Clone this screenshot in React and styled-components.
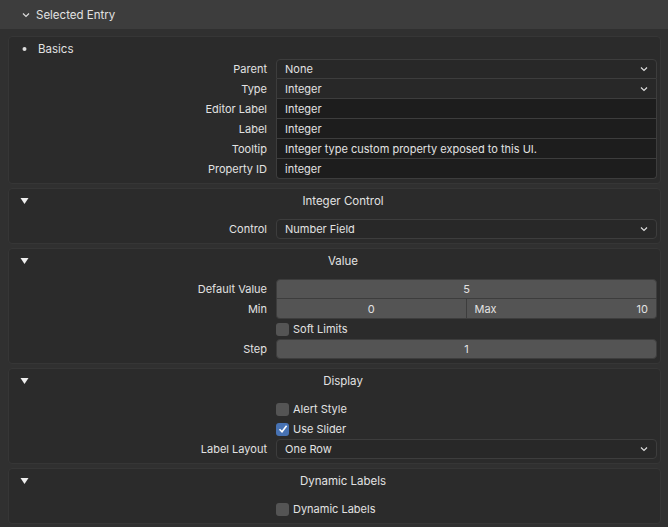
import React from 'react';
import styled, { createGlobalStyle } from 'styled-components';

const GlobalStyle = createGlobalStyle`
  body {
    margin: 0;
    background: #303030;
    font-family: Inter, "DejaVu Sans", sans-serif;
    font-size: 11px;
    color: #e2e2e2;
    overflow: hidden;
  }
`;

const Page = styled.div`
  width: 668px;
  height: 527px;
  overflow: hidden;
  background: #303030;
`;

const TopBar = styled.div`
  height: 29px;
  background: #3d3d3d;
  display: flex;
  align-items: center;
  gap: 6px;
  padding-left: 22px;
  font-size: 11.5px;
`;

const Body = styled.div`
  display: flex;
  flex-direction: column;
  gap: 4px;
  padding: 7px 7px 0 8px;
`;

const Panel = styled.div`
  background: #2b2b2b;
  border: 1px solid #363636;
  border-radius: 4px;
  padding: 0 3px 4px 0;
`;

const PanelHead = styled.div`
  height: 22px;
  box-sizing: border-box;
  padding-top: 2px;
  display: flex;
  align-items: center;
  padding-left: 11px;
  margin-bottom: ${(p) => (p.$gap ? '8px' : '0')};
`;

const Title = styled.div`
  flex: 1;
  text-align: ${(p) => (p.$left ? 'left' : 'center')};
  padding-left: ${(p) => (p.$left ? '9px' : '0')};
  font-size: 11.5px;
`;

const Rows = styled.div`
  display: flex;
  flex-direction: column;
`;

const Row = styled.div`
  display: grid;
  grid-template-columns: 258px 1fr;
  column-gap: 9px;
  height: 20px;
  align-items: center;
`;

const Label = styled.div`
  text-align: right;
`;

const Field = styled.div`
  height: 20px;
  box-sizing: border-box;
  display: flex;
  align-items: center;
  padding: 0 8px;
  border: 1px solid #3d3d3d;
  background: ${(p) => (p.$kind === 'text' ? '#1d1d1d' : p.$kind === 'num' ? '#545454' : '#282828')};
  justify-content: ${(p) => (p.$kind === 'num' ? 'center' : 'space-between')};
  border-radius: ${(p) => p.$radius || '4px'};
  border-top-width: ${(p) => (p.$joined ? '0' : '1px')};
`;

const Split = styled.div`
  display: grid;
  grid-template-columns: 1fr 1fr;
`;

const Half = styled(Field)`
  justify-content: ${(p) => (p.$between ? 'space-between' : 'center')};
  border-radius: ${(p) => (p.$right ? '0 0 4px 0' : '0 0 0 4px')};
  border-left-width: ${(p) => (p.$right ? '0' : '1px')};
`;

const Check = styled.div`
  display: flex;
  align-items: center;
  gap: 4px;
`;

const Box = styled.span`
  width: 13px;
  height: 13px;
  border-radius: 3px;
  background: ${(p) => (p.$on ? '#4772b3' : '#545454')};
  display: flex;
  align-items: center;
  justify-content: center;
`;

const Chevron = () => (
  <svg width="8" height="8" viewBox="0 0 8 8">
    <path d="M1 2.5 L4 5.5 L7 2.5" fill="none" stroke="#ddd" strokeWidth="1.2" />
  </svg>
);

const Tri = () => (
  <svg width="9" height="8" viewBox="0 0 9 8">
    <path d="M0.5 1 L8.5 1 L4.5 7 Z" fill="#eee" />
  </svg>
);

const Dot = () => (
  <svg width="9" height="8" viewBox="0 0 9 8">
    <circle cx="4.5" cy="4" r="2" fill="#ddd" />
  </svg>
);

const CheckRow = ({ label, on }) => (
  <Row>
    <span />
    <Check>
      <Box $on={on}>
        {on && (
          <svg width="10" height="10" viewBox="0 0 10 10">
            <path d="M1.5 5.2 L4 7.7 L8.6 1.8" fill="none" stroke="#fff" strokeWidth="1.6" />
          </svg>
        )}
      </Box>
      {label}
    </Check>
  </Row>
);

const basics = [
  ['Parent', 'None', 'drop'],
  ['Type', 'Integer', 'drop'],
  ['Editor Label', 'Integer', 'text'],
  ['Label', 'Integer', 'text'],
  ['Tooltip', 'Integer type custom property exposed to this UI.', 'text'],
  ['Property ID', 'integer', 'text'],
];

const radiusFor = (i, n) => (i === 0 ? '4px 4px 0 0' : i === n - 1 ? '0 0 4px 4px' : '0');

export default function App() {
  return (
    <Page>
      <GlobalStyle />
      <TopBar>
        <Chevron /> Selected Entry
      </TopBar>
      <Body>
        <Panel>
          <PanelHead>
            <Dot />
            <Title $left>Basics</Title>
          </PanelHead>
          <Rows>
            {basics.map(([l, v, k], i) => (
              <Row key={l}>
                <Label>{l}</Label>
                <Field $kind={k} $joined={i > 0} $radius={radiusFor(i, basics.length)}>
                  {v}
                  {k === 'drop' && <Chevron />}
                </Field>
              </Row>
            ))}
          </Rows>
        </Panel>

        <Panel>
          <PanelHead $gap>
            <Tri />
            <Title>Integer Control</Title>
          </PanelHead>
          <Rows>
            <Row>
              <Label>Control</Label>
              <Field>
                Number Field <Chevron />
              </Field>
            </Row>
          </Rows>
        </Panel>

        <Panel>
          <PanelHead $gap>
            <Tri />
            <Title>Value</Title>
          </PanelHead>
          <Rows>
            <Row>
              <Label>Default Value</Label>
              <Field $kind="num" $radius="4px 4px 0 0">5</Field>
            </Row>
            <Row>
              <Label>Min</Label>
              <Split>
                <Half $kind="num" $joined>0</Half>
                <Half $kind="num" $joined $right $between>
                  <span>Max</span>
                  <span>10</span>
                </Half>
              </Split>
            </Row>
            <CheckRow label="Soft Limits" />
            <Row>
              <Label>Step</Label>
              <Field $kind="num">1</Field>
            </Row>
          </Rows>
        </Panel>

        <Panel>
          <PanelHead $gap>
            <Tri />
            <Title>Display</Title>
          </PanelHead>
          <Rows>
            <CheckRow label="Alert Style" />
            <CheckRow label="Use Slider" on />
            <Row>
              <Label>Label Layout</Label>
              <Field>
                One Row <Chevron />
              </Field>
            </Row>
          </Rows>
        </Panel>

        <Panel>
          <PanelHead $gap>
            <Tri />
            <Title>Dynamic Labels</Title>
          </PanelHead>
          <Rows>
            <CheckRow label="Dynamic Labels" />
          </Rows>
        </Panel>
      </Body>
    </Page>
  );
}
